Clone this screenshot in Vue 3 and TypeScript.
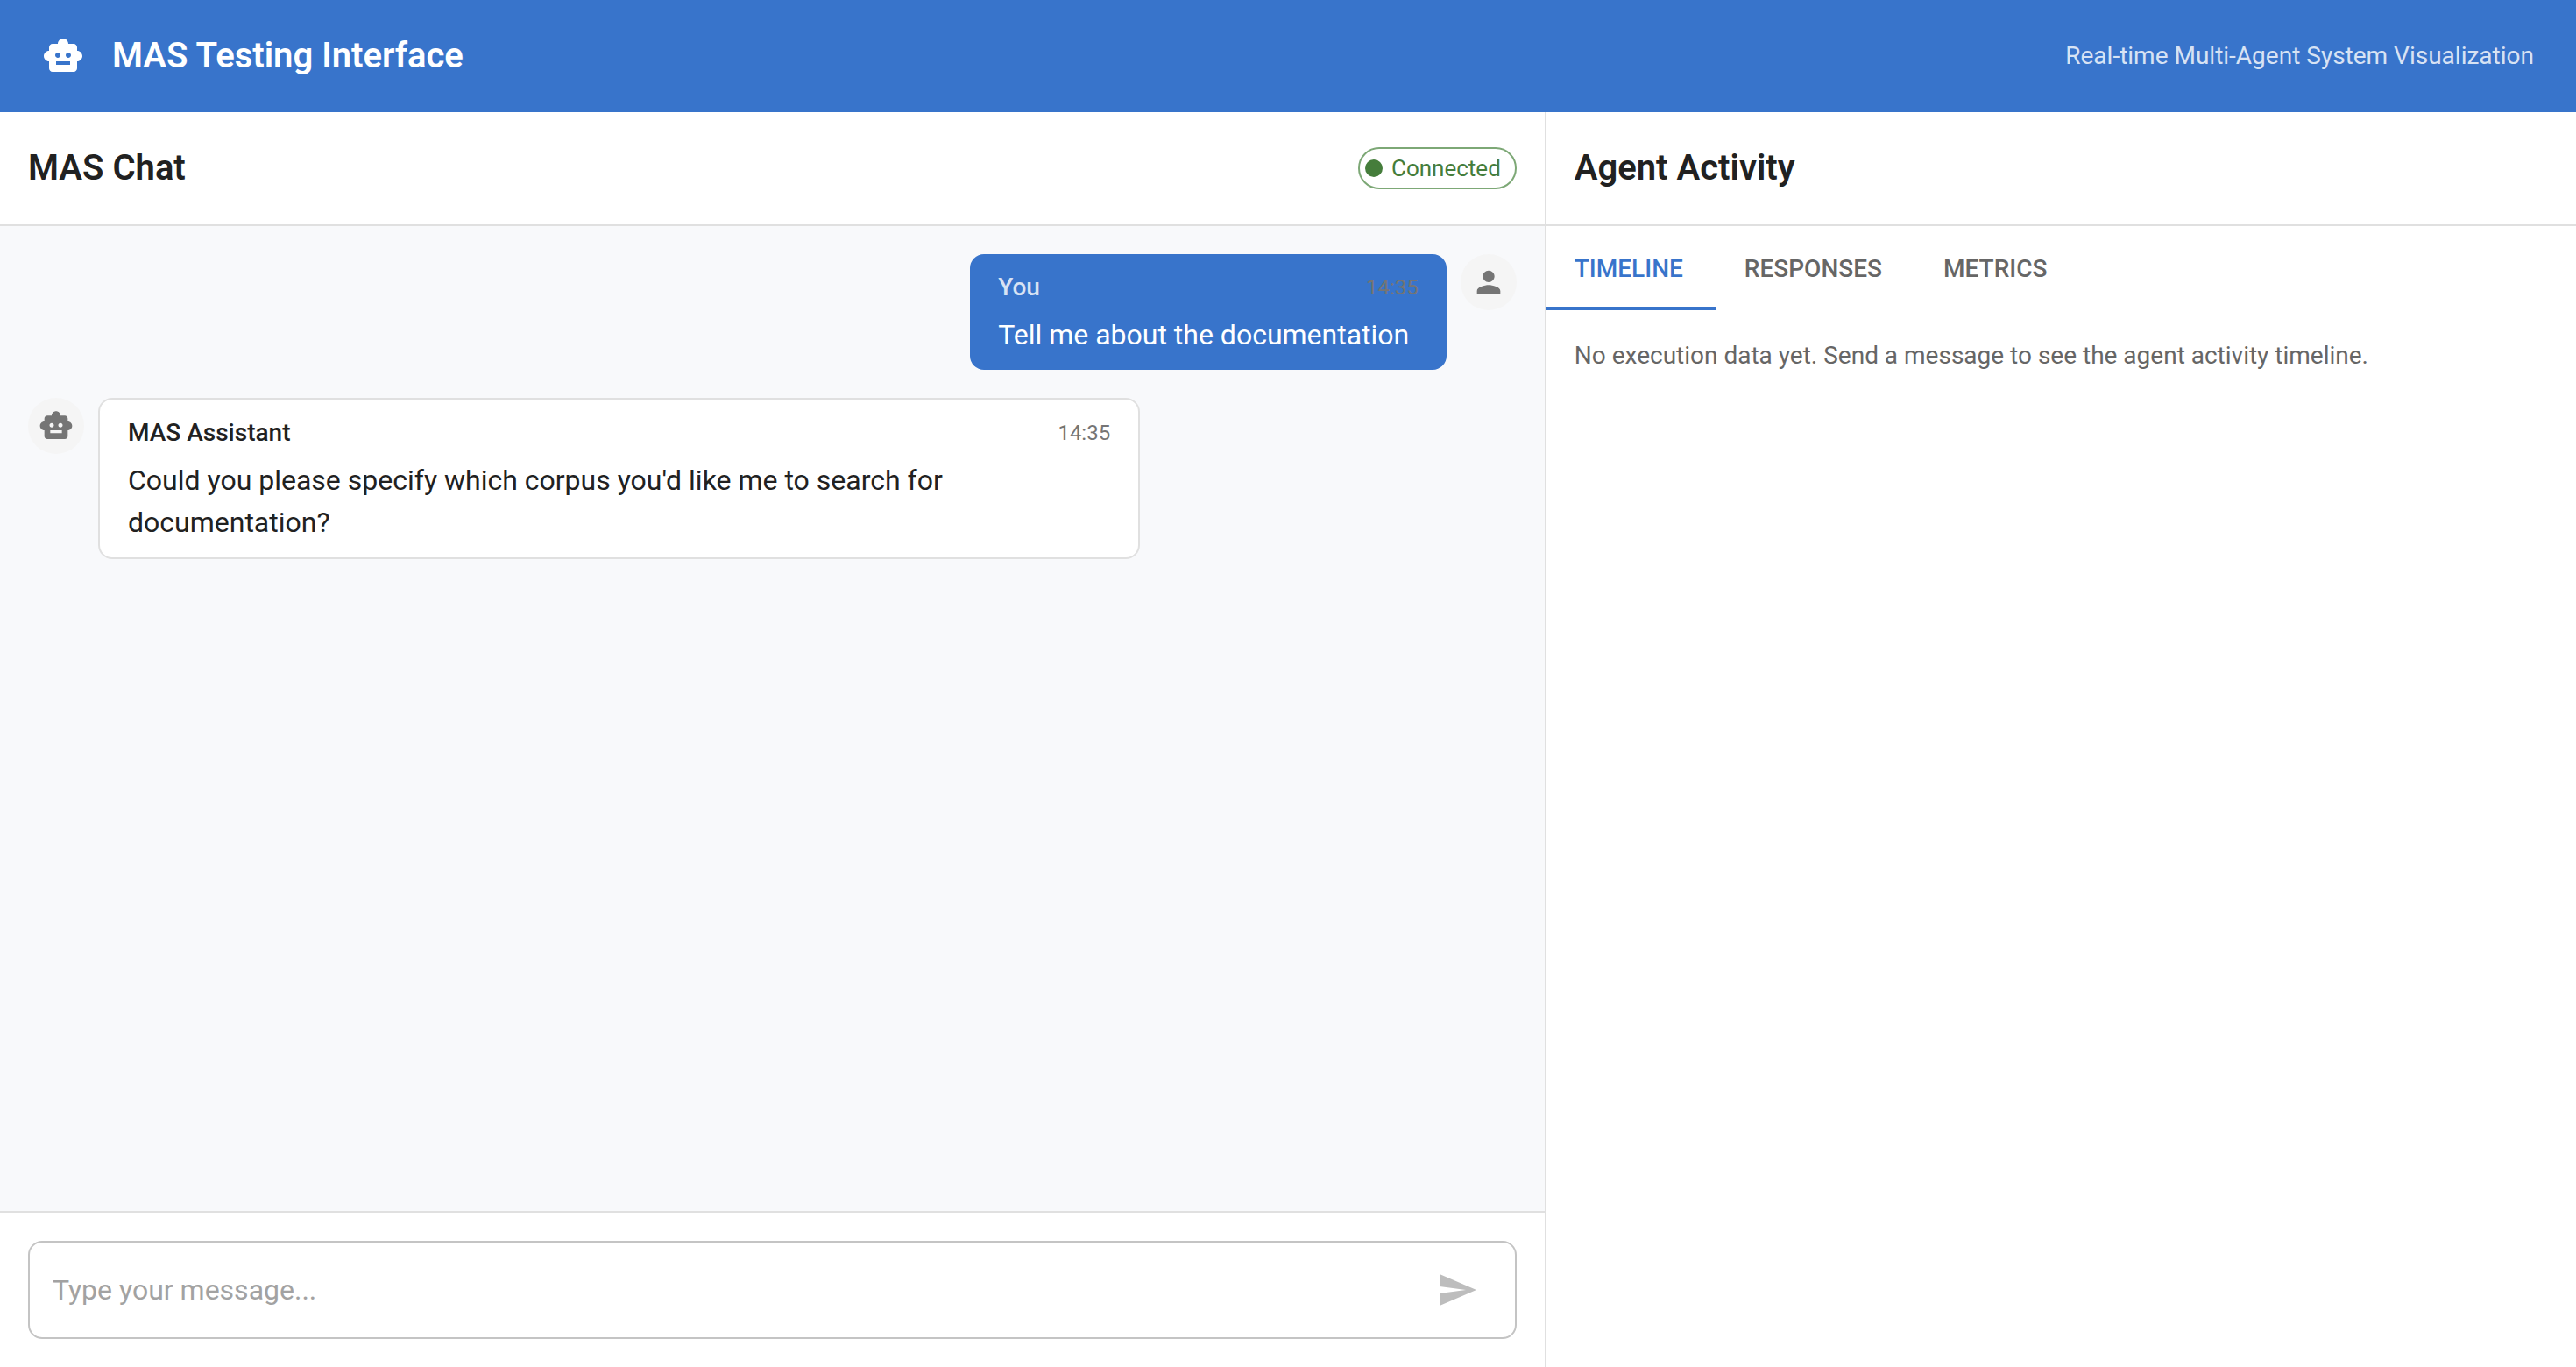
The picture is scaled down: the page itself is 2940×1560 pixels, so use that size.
<script setup lang="ts">
import { ref } from 'vue'

interface Message {
  id: number
  role: 'user' | 'assistant'
  author: string
  time: string
  text: string
}

const robotPath =
  'M20 9V7c0-1.1-.9-2-2-2h-3c0-1.66-1.34-3-3-3S9 3.34 9 5H6c-1.1 0-2 .9-2 2v2c-1.66 0-3 1.34-3 3s1.34 3 3 3v4c0 1.1.9 2 2 2h12c1.1 0 2-.9 2-2v-4c1.66 0 3-1.34 3-3s-1.34-3-3-3zM7.5 11.5c0-.83.67-1.5 1.5-1.5s1.5.67 1.5 1.5S9.83 13 9 13s-1.5-.67-1.5-1.5zM16 17H8v-2h8v2zm-1-4c-.83 0-1.5-.67-1.5-1.5S14.17 10 15 10s1.5.67 1.5 1.5S15.83 13 15 13z'
const personPath =
  'M12 12c2.21 0 4-1.79 4-4s-1.79-4-4-4-4 1.79-4 4 1.79 4 4 4zm0 2c-2.67 0-8 1.34-8 4v2h16v-2c0-2.66-5.33-4-8-4z'

const messages = ref<Message[]>([
  { id: 1, role: 'user', author: 'You', time: '14:35', text: 'Tell me about the documentation' },
  {
    id: 2,
    role: 'assistant',
    author: 'MAS Assistant',
    time: '14:35',
    text: "Could you please specify which corpus you'd like me to search for documentation?",
  },
])

const tabs = ['Timeline', 'Responses', 'Metrics'] as const
type Tab = (typeof tabs)[number]

const emptyText: Record<Tab, string> = {
  Timeline: 'No execution data yet. Send a message to see the agent activity timeline.',
  Responses: 'No agent responses yet.',
  Metrics: 'No metrics yet.',
}

const activeTab = ref<Tab>('Timeline')
const draft = ref('')

function send() {
  const text = draft.value.trim()
  if (!text) return
  const time = new Date().toTimeString().slice(0, 5)
  messages.value.push({ id: messages.value.length + 1, role: 'user', author: 'You', time, text })
  draft.value = ''
}
</script>

<template>
  <div class="app">
    <header class="app-bar">
      <svg class="icon-lg" viewBox="0 0 24 24" aria-hidden="true"><path :d="robotPath" /></svg>
      <h1 class="title">MAS Testing Interface</h1>
      <p class="tagline">Real-time Multi-Agent System Visualization</p>
    </header>

    <main class="panels">
      <section class="chat">
        <div class="panel-head">
          <h2 class="title">MAS Chat</h2>
          <span class="chip">
            <svg class="chip-dot" viewBox="0 0 24 24" aria-hidden="true"><circle cx="12" cy="12" r="10" /></svg>
            <span>Connected</span>
          </span>
        </div>

        <div class="messages">
          <article v-for="m in messages" :key="m.id" class="message" :class="m.role">
            <div class="avatar">
              <svg class="icon-md" viewBox="0 0 24 24" aria-hidden="true">
                <path :d="m.role === 'user' ? personPath : robotPath" />
              </svg>
            </div>
            <div class="bubble">
              <div class="meta">
                <span class="author">{{ m.author }}</span>
                <time class="time">{{ m.time }}</time>
              </div>
              <p class="body">{{ m.text }}</p>
            </div>
          </article>
        </div>

        <form class="composer" @submit.prevent="send">
          <div class="field">
            <input v-model="draft" class="input" type="text" placeholder="Type your message..." aria-label="Message" />
            <button class="send" type="submit" :disabled="!draft.trim()" aria-label="Send">
              <svg class="icon-lg" viewBox="0 0 24 24" aria-hidden="true">
                <path d="M2.01 21 23 12 2.01 3 2 10l15 2-15 2z" />
              </svg>
            </button>
          </div>
        </form>
      </section>

      <section class="activity">
        <div class="panel-head">
          <h2 class="title">Agent Activity</h2>
        </div>
        <div class="tabs" role="tablist">
          <button
            v-for="tab in tabs"
            :key="tab"
            class="tab"
            :class="{ active: tab === activeTab }"
            type="button"
            role="tab"
            :aria-selected="tab === activeTab"
            @click="activeTab = tab"
          >
            {{ tab }}
          </button>
        </div>
        <p class="empty" role="tabpanel">{{ emptyText[activeTab] }}</p>
      </section>
    </main>
  </div>
</template>

<style>
body {
  margin: 0;
}
</style>

<style scoped>
.app {
  --primary: #3874cb;
  --success: #457d3b;
  --divider: #e0e0e0;
  display: flex;
  flex-direction: column;
  min-height: 100vh;
  background: #fff;
  color: #212121;
  font-family: Roboto, "Liberation Sans", sans-serif;
  font-size: 32px;
  line-height: 48px;
}

.app *,
.app {
  box-sizing: border-box;
}

h1,
h2,
p {
  margin: 0;
}

svg {
  display: block;
  flex: none;
  fill: currentColor;
}

.icon-lg {
  width: 48px;
  height: 48px;
}

.icon-md {
  width: 40px;
  height: 40px;
}

.title {
  font-size: 40px;
  line-height: 64px;
  font-weight: 600;
}

.app-bar {
  display: flex;
  align-items: center;
  gap: 32px;
  padding: 32px 48px;
  background: var(--primary);
  color: #fff;
}

.tagline {
  margin-left: auto;
  font-size: 28px;
  line-height: 40px;
  opacity: 0.8;
}

.panels {
  display: flex;
  flex: 1;
}

.chat {
  display: flex;
  flex: 3 1 0;
  flex-direction: column;
  min-width: 0;
  border-right: 2px solid var(--divider);
}

.activity {
  flex: 2 1 0;
  min-width: 0;
}

.panel-head {
  display: flex;
  align-items: center;
  justify-content: space-between;
  padding: 32px;
  border-bottom: 2px solid var(--divider);
}

.chip {
  display: flex;
  align-items: center;
  gap: 8px;
  height: 48px;
  padding: 0 16px 0 4px;
  border: 2px solid #7da876;
  border-radius: 24px;
  color: var(--success);
  font-size: 26px;
}

.chip-dot {
  width: 24px;
  height: 24px;
}

.messages {
  display: flex;
  flex: 1;
  flex-direction: column;
  gap: 32px;
  padding: 32px;
  background: #f8f9fb;
}

.message {
  display: flex;
  align-items: flex-start;
  gap: 16px;
}

.message.user {
  flex-direction: row-reverse;
}

.avatar {
  display: flex;
  flex: none;
  align-items: center;
  justify-content: center;
  width: 64px;
  height: 64px;
  border-radius: 50%;
  background: #f5f5f5;
  color: #757575;
}

.bubble {
  min-width: 32%;
  max-width: 70%;
  padding: 16px 32px;
  border: 2px solid var(--divider);
  border-radius: 16px;
  background: #fff;
}

.user .bubble {
  border: 0;
  background: var(--primary);
  color: #fff;
}

.meta {
  display: flex;
  align-items: center;
  justify-content: space-between;
  margin-bottom: 8px;
}

.author {
  font-size: 28px;
  line-height: 44px;
  font-weight: 500;
}

.user .author {
  opacity: 0.8;
}

.time {
  color: #757575;
  font-size: 24px;
  line-height: 40px;
}

.composer {
  padding: 32px;
  border-top: 2px solid var(--divider);
}

.field {
  display: flex;
  align-items: center;
  height: 112px;
  padding: 0 26px;
  border: 2px solid #c4c4c4;
  border-radius: 16px;
}

.input {
  flex: 1;
  min-width: 0;
  padding: 0;
  border: 0;
  outline: 0;
  background: none;
  color: inherit;
  font: inherit;
}

.input::placeholder {
  color: #a2a2a2;
  opacity: 1;
}

.send {
  padding: 16px;
  border: 0;
  border-radius: 50%;
  background: none;
  color: var(--primary);
}

.send:disabled {
  color: #bdbdbd;
}

.tabs {
  display: flex;
}

.tab {
  height: 96px;
  padding: 0 38px 0 32px;
  border: 0;
  background: none;
  color: #666;
  font-family: inherit;
  font-size: 28px;
  font-weight: 500;
  text-transform: uppercase;
}

.tab.active {
  box-shadow: inset 0 -4px var(--primary);
  color: var(--primary);
}

.empty {
  padding: 32px;
  color: #666;
  font-size: 28px;
  line-height: 40px;
}
</style>
